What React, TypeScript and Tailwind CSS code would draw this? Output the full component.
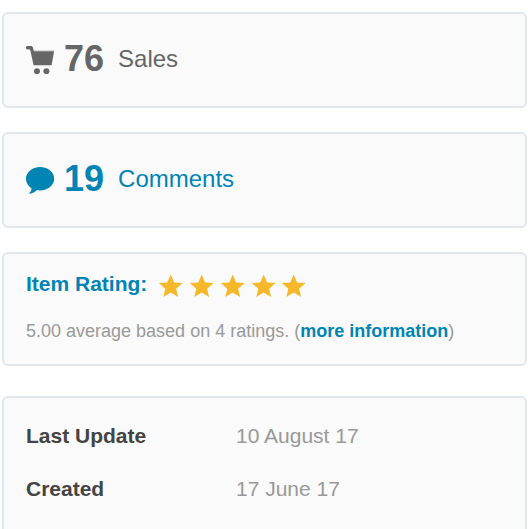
import type { ReactNode } from "react";

const details = [
  { label: "Last Update", value: "10 August 17" },
  { label: "Created", value: "17 June 17" },
];

function Card({ className, children }: { className: string; children: ReactNode }) {
  return (
    <section className={`border-2 border-[#e1e8ed] bg-[#fafafa] px-[22px] ${className}`}>
      {children}
    </section>
  );
}

function CartIcon() {
  return (
    <svg className="mt-0.5 h-7 w-7 shrink-0" viewBox="0 0 28 28" fill="currentColor" aria-hidden="true">
      <path d="M1.6 0H4.8C6 0 6.6 .5 6.9 1.6L7.8 4.7H28.2L25.6 19.2H7.6L4.3 4.2C4.2 3.7 4 3.5 3.5 3.5H1.6A1.75 1.75 0 0 1 1.6 0Z" />
      <path d="M7.8 5.3H27.9" stroke="#fafafa" strokeWidth="0.8" opacity="0.4" />
      <circle cx="11" cy="25.2" r="3" />
      <circle cx="20.4" cy="25.2" r="3" />
    </svg>
  );
}

function CommentIcon() {
  return (
    <svg className="mt-0.5 h-7 w-7 shrink-0" viewBox="0 0 28 28" fill="currentColor" aria-hidden="true">
      <path d="M14 1C21.7 1 28.2 6.2 28.2 12.7S21.7 24.4 14 24.4C12.9 24.4 11.9 24.3 10.9 24.1C8.8 26.3 6.7 27.5 4 27.8C3.3 27.9 3.1 27.2 3.6 26.7C4.9 25.4 5.5 24.2 5.6 22.4C2.2 20.3 0 16.7 0 12.7C0 6.2 6.3 1 14 1Z" />
    </svg>
  );
}

function Star() {
  return (
    <svg className="h-6 w-6" viewBox="0 0 24 24" fill="#f4b82a" aria-hidden="true">
      <path d="M11.7 .4L15.1 8.4L23.6 9.1L17.1 14.7L19.1 23.1L11.7 18.6L4.3 23.1L6.3 14.7L-.2 9.1L8.3 8.4Z" />
    </svg>
  );
}

export default function App() {
  return (
    <main
      className="flex h-screen flex-col overflow-hidden bg-white pl-0.5 pr-px pt-3 text-[#999999]"
      style={{ fontFamily: '"Liberation Sans", Arial, sans-serif' }}
    >
      <Card className="mb-6 flex h-24 shrink-0 items-center rounded-md pb-[3px] text-[#666666]">
        <CartIcon />
        <strong className="ml-2.5 text-4xl font-bold">76</strong>
        <span className="ml-3.5 text-2xl">Sales</span>
      </Card>

      <Card className="mb-6 flex h-24 shrink-0 items-center rounded-md pb-[3px] text-[#0084b4]">
        <a href="#comments" className="flex items-center">
          <CommentIcon />
          <strong className="ml-2.5 text-4xl font-bold">19</strong>
          <span className="ml-3.5 text-2xl">Comments</span>
        </a>
      </Card>

      <Card className="mb-[30px] shrink-0 rounded-md pb-[19px] pt-4">
        <div className="flex items-center">
          <h2 className="text-[21px] font-bold leading-7 text-[#0084b4]">Item Rating:</h2>
          <div className="ml-3 mt-1 flex w-[147px] justify-between" role="img" aria-label="5 out of 5 stars">
            <Star />
            <Star />
            <Star />
            <Star />
            <Star />
          </div>
        </div>
        <p className="mt-[19px] text-lg leading-7">
          5.00 average based on 4 ratings. (
          <a href="#ratings" className="font-bold text-[#0084b4]">more information</a>)
        </p>
      </Card>

      {/* Runs on past the bottom edge */}
      <Card className="flex-1 rounded-t-md border-b-0 pt-[11px]">
        <table className="w-full text-left text-[21px] leading-7">
          <tbody>
            {details.map(({ label, value }) => (
              <tr key={label} className="h-[53px]">
                <th scope="row" className="w-[210px] p-0 font-bold text-[#444444]">{label}</th>
                <td className="p-0">{value}</td>
              </tr>
            ))}
          </tbody>
        </table>
      </Card>
    </main>
  );
}
